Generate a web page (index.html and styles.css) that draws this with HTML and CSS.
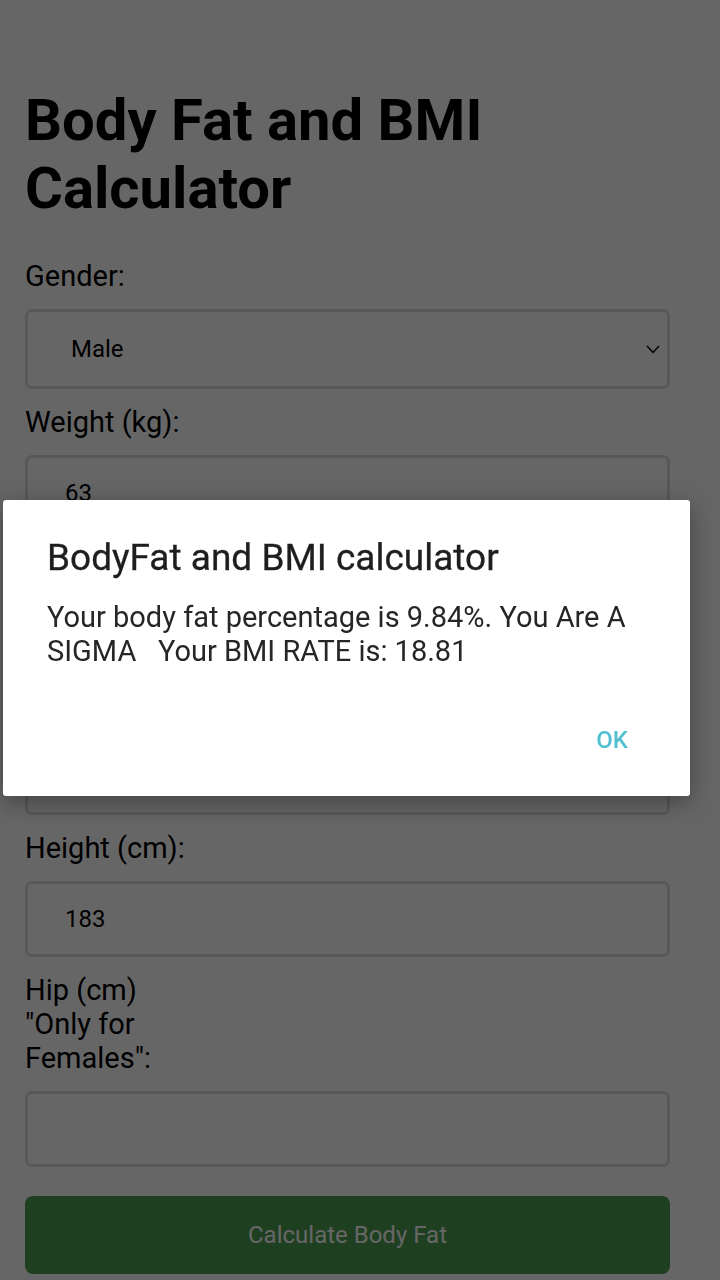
FILE: index.html
```html
<!DOCTYPE html>
<html>
<head>
    <meta name="viewport" content="width=device-width, initial-scale=1">
    <link rel="stylesheet" href="styles.css">
</head>

<body>
    <div class="wrapper">
        <h1>Body Fat and BMI Calculator</h1>

        <form action="#">
            <label for="gender">Gender:</label>
            <div class="select-box">
                <select id="gender" name="gender">
                    <option value="male" selected>Male</option>
                    <option value="female">Female</option>
                </select>
                <svg class="chevron" width="14" height="9" viewBox="0 0 14 9">
                    <path d="M1 1 L7 7.5 L13 1" fill="none" stroke="#000" stroke-width="1.5"/>
                </svg>
            </div>

            <label for="weight">Weight (kg):</label>
            <input type="number" id="weight" name="weight" value="63">

            <label for="neck">Neck (cm):</label>
            <input type="number" id="neck" name="neck" value="37">

            <label for="waist">Waist (cm):</label>
            <input type="number" id="waist" name="waist" value="74">

            <label for="height">Height (cm):</label>
            <input type="number" id="height" name="height" value="183">

            <label for="hip">Hip (cm) "Only for Females":</label>
            <input type="number" id="hip" name="hip">

            <input type="submit" value="Calculate Body Fat">
        </form>
    </div>

    <!-- Окно с результатом расчёта -->
    <div class="overlay"></div>
    <div class="dialog">
        <h2>BodyFat and BMI calculator</h2>
        <p>Your body fat percentage is 9.84%. You Are A SIGMA&nbsp;&nbsp; Your BMI RATE is: 18.81</p>
        <div class="actions">
            <button type="button">OK</button>
        </div>
    </div>
</body>
</html>
```

FILE: styles.css
```css
body {
    margin: 0;
    background: #fff;
    font-family: Roboto, "Liberation Sans", sans-serif;
    color: #000;
}

.wrapper {
    width: 645px;
    margin-left: 25px;
}

h1 {
    font-size: 58px;
    line-height: 68px;
    font-weight: 700;
    margin: 86px 0 37px;
}

label {
    display: block;
    width: 170px;
    font-size: 29px;
    line-height: 34px;
}

input,
select {
    display: block;
    width: 100%;
    box-sizing: border-box;
    border: 3px solid #dcdcdc;
    border-radius: 7px;
    background: #fff;
    font-family: Roboto, "Liberation Sans", sans-serif;
    font-size: 24px;
    color: #000;
}

input {
    height: 76px;
    margin: 16px 0;
    padding: 0 37px;
}

/* Стиль выпадающего списка */
.select-box {
    position: relative;
    margin: 16px 0;
}

select {
    height: 80px;
    padding: 0 43px;
    appearance: none;
    -webkit-appearance: none;
}

.chevron {
    position: absolute;
    right: 10px;
    top: 36px;
}

/* Стиль кнопки отправки */
input[type=submit] {
    height: 78px;
    margin-top: 29px;
    border: none;
    border-radius: 8px;
    background-color: rgb(75, 158, 80);
    color: #fff;
    font-size: 24px;
    padding: 0;
}

.overlay {
    position: fixed;
    inset: 0;
    background: rgba(0, 0, 0, 0.6);
}

.dialog {
    position: fixed;
    left: 3px;
    top: 500px;
    width: 687px;
    height: 296px;
    box-sizing: border-box;
    background: #fff;
    border-radius: 3px;
    box-shadow: 0 6px 24px rgba(0, 0, 0, 0.35);
    padding: 36px 44px 0;
}

.dialog h2 {
    margin: 0;
    font-size: 37px;
    line-height: 44px;
    font-weight: 400;
    color: #1e1e1e;
    -webkit-text-stroke: 0.3px #1e1e1e;
}

.dialog p {
    margin: 20px 0 0;
    font-size: 29px;
    line-height: 34px;
    color: #262626;
}

.actions {
    display: flex;
    justify-content: flex-end;
    margin-top: 50px;
}

.actions button {
    border: none;
    background: none;
    font-family: Roboto, "Liberation Sans", sans-serif;
    font-size: 24px;
    font-weight: 500;
    color: #52bfd0;
    padding: 8px 18px;
}
```
